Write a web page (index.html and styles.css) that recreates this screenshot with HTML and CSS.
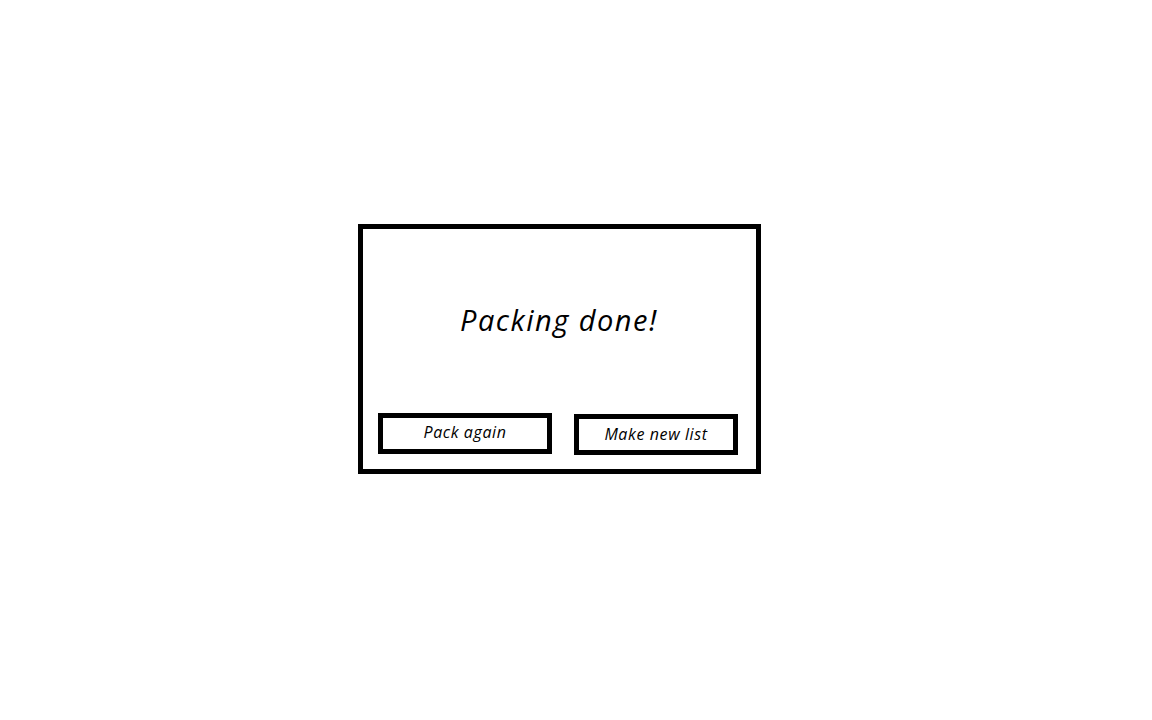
FILE: index.html
```html
<!DOCTYPE html>
<html lang="en">
<head>
    <meta charset="UTF-8">
    <title>Packing done</title>
    <link rel="stylesheet" href="styles.css">
</head>
<body>
    <div class="page">
        <div class="doneBox">
            <h1 class="doneTitle">Packing done!</h1>
            <div class="actions">
                <button class="actionBtn packAgain">Pack again</button>
                <button class="actionBtn newList">Make new list</button>
            </div>
        </div>
    </div>
</body>
</html>
```

FILE: styles.css
```css
body {
    margin: 0;
    background: #ffffff;
    font-family: "Open Sans", "Noto Sans", sans-serif;
    color: #000000;
}
.page {
    padding: 224px 0 0 358px;
}
.doneBox {
    width: 360px; /* 403 incl. border and padding */
    height: 226px; /* 250 incl. border and padding */
    border: 5px solid #000000;
    display: flex;
    flex-direction: column;
    padding: 0 18px 14px 15px;
}
.doneTitle {
    flex: 1;
    margin: 0;
    display: flex;
    align-items: center;
    justify-content: center;
    font-size: 29px;
    letter-spacing: 1.5px;
    font-style: italic;
    font-weight: 400;
    padding: 0 0 4px 2px;
}
.actions {
    display: flex;
    align-items: flex-end;
    gap: 22px;
}
.actionBtn {
    height: 41px;
    border: 5px solid #000000;
    background: #ffffff;
    font-family: "Open Sans", "Noto Sans", sans-serif;
    font-style: italic;
    font-size: 16px;
    letter-spacing: 0.6px;
    color: #000000;
    padding: 0;
    box-sizing: border-box;
    cursor: pointer;
}
.packAgain {
    width: 174px;
    margin-bottom: 1px;
    padding-bottom: 3px;
}
.newList {
    width: 164px;
    padding-bottom: 2px;
}
```
